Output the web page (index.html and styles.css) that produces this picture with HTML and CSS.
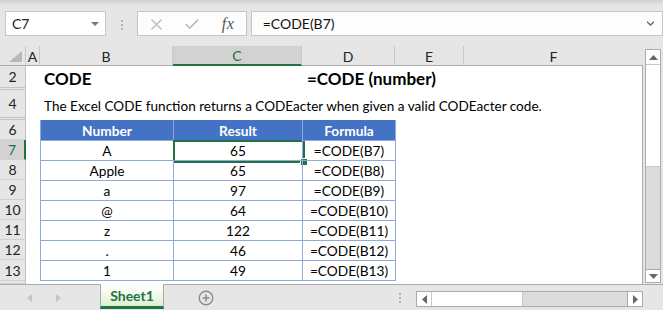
FILE: index.html
```html
<!DOCTYPE html>
<html>
<head>
<meta charset="utf-8">
<link rel="stylesheet" href="styles.css">
</head>
<body>
<div class="app">
  <div class="toolbar">
    <div class="namebox"><span>C7</span><svg width="8" height="4" viewBox="0 0 8 4"><polygon points="0,0 8,0 4,4" fill="#777"/></svg></div>
    <svg class="grip" width="2" height="10" viewBox="0 0 2 10"><rect x="0" y="0" width="2" height="2" fill="#b4b4b4"/><rect x="0" y="4" width="2" height="2" fill="#b4b4b4"/><rect x="0" y="8" width="2" height="2" fill="#b4b4b4"/></svg>
    <div class="fbtns">
      <svg class="ic-x" width="11" height="11" viewBox="0 0 11 11"><path d="M0.5 0.5 L10.5 10.5 M10.5 0.5 L0.5 10.5" stroke="#bcbcbc" stroke-width="1.4" fill="none"/></svg>
      <svg class="ic-ok" width="14" height="10" viewBox="0 0 14 10"><path d="M0.8 5 L4.8 9 L13.2 0.6" stroke="#bcbcbc" stroke-width="1.6" fill="none"/></svg>
      <span class="fx">fx</span>
    </div>
    <div class="finput"><span>=CODE(B7)</span><svg width="7" height="5" viewBox="0 0 7 5"><path d="M0 0 L3.5 3 L7 0 L7 1.8 L3.5 5 L0 1.8 Z" fill="#6a6a6a"/></svg></div>
  </div>

  <div class="main">
    <div class="sheet">
      <div class="row head">
        <div class="corner"><svg width="13" height="11" viewBox="0 0 13 11"><polygon points="13,0 13,11 0,11" fill="#b8b8b8"/></svg></div>
        <div class="ch">A</div>
        <div class="ch">B</div>
        <div class="ch sel">C</div>
        <div class="ch">D</div>
        <div class="ch">E</div>
        <div class="ch last">F</div>
      </div>
      <div class="row r2">
        <div class="rh dbl">2</div><div></div>
        <div class="title">CODE</div><div></div>
        <div class="title syn">=CODE (number)</div><div></div><div class="edge"></div>
      </div>
      <div class="row r4">
        <div class="rh dbl">4</div><div></div>
        <div class="desc">The Excel CODE function returns a CODEacter when given a valid CODEacter code.</div><div></div>
        <div></div><div></div><div class="edge"></div>
      </div>
      <div class="row r6">
        <div class="rh">6</div><div></div>
        <div class="th">Number</div><div class="th">Result</div><div class="th">Formula</div>
        <div class="tend"></div><div class="edge"></div>
      </div>
      <div class="row">
        <div class="rh rsel">7</div><div></div>
        <div class="td">A</div><div class="td cur">65<span class="selbox"></span><span class="handle"></span></div><div class="td">=CODE(B7)</div>
        <div class="tend"></div><div class="edge"></div>
      </div>
      <div class="row">
        <div class="rh">8</div><div></div>
        <div class="td">Apple</div><div class="td">65</div><div class="td">=CODE(B8)</div>
        <div class="tend"></div><div class="edge"></div>
      </div>
      <div class="row">
        <div class="rh">9</div><div></div>
        <div class="td">a</div><div class="td">97</div><div class="td">=CODE(B9)</div>
        <div class="tend"></div><div class="edge"></div>
      </div>
      <div class="row">
        <div class="rh">10</div><div></div>
        <div class="td">@</div><div class="td">64</div><div class="td">=CODE(B10)</div>
        <div class="tend"></div><div class="edge"></div>
      </div>
      <div class="row">
        <div class="rh">11</div><div></div>
        <div class="td">z</div><div class="td">122</div><div class="td">=CODE(B11)</div>
        <div class="tend"></div><div class="edge"></div>
      </div>
      <div class="row">
        <div class="rh">12</div><div></div>
        <div class="td">.</div><div class="td">46</div><div class="td">=CODE(B12)</div>
        <div class="tend"></div><div class="edge"></div>
      </div>
      <div class="row r13">
        <div class="rh">13</div><div></div>
        <div class="td">1</div><div class="td">49</div><div class="td">=CODE(B13)</div>
        <div class="tend"></div><div class="edge"></div>
      </div>
      <div class="row r14">
        <div class="rh"></div><div></div><div></div><div></div><div></div><div></div><div class="edge"></div>
      </div>
    </div>
    <div class="vscroll">
      <div class="vbox">
        <div class="vbtn up"><svg width="9" height="5" viewBox="0 0 9 5"><polygon points="0,5 9,5 4.5,0" fill="#666"/></svg></div>
        <div class="vthumb"></div>
        <div class="vtrack"></div>
        <div class="vbtn down"><svg width="9" height="5" viewBox="0 0 9 5"><polygon points="0,0 9,0 4.5,5" fill="#666"/></svg></div>
      </div>
    </div>
  </div>

  <div class="tabbar">
    <div class="nav">
      <svg width="5" height="8" viewBox="0 0 5 8"><polygon points="5,0 5,8 0,4" fill="#c4c4c4"/></svg>
      <svg width="5" height="8" viewBox="0 0 5 8"><polygon points="0,0 0,8 5,4" fill="#c4c4c4"/></svg>
    </div>
    <div class="tab">Sheet1</div>
    <svg class="plus" width="16" height="16" viewBox="0 0 16 16"><circle cx="8" cy="8" r="6.8" stroke="#8c8c8c" stroke-width="1.4" fill="none"/><path d="M8 4.5 V11.5 M4.5 8 H11.5" stroke="#8c8c8c" stroke-width="1.6"/></svg>
    <svg class="hgrip" width="2" height="10" viewBox="0 0 2 10"><rect x="0" y="0" width="2" height="2" fill="#b4b4b4"/><rect x="0" y="4" width="2" height="2" fill="#b4b4b4"/><rect x="0" y="8" width="2" height="2" fill="#b4b4b4"/></svg>
    <div class="hscroll">
      <div class="hbtn"><svg width="5" height="9" viewBox="0 0 5 9"><polygon points="5,0 5,9 0,4.5" fill="#666"/></svg></div>
      <div class="hthumb"></div>
      <div class="htrack"></div>
      <div class="hbtn"><svg width="5" height="9" viewBox="0 0 5 9"><polygon points="0,0 0,9 5,4.5" fill="#666"/></svg></div>
    </div>
  </div>
</div>
</body>
</html>
```

FILE: styles.css
```css
html, body {
  margin: 0;
  padding: 0;
}
body {
  width: 663px;
  height: 310px;
  overflow: hidden;
  background: #e6e6e6;
  font-family: Lato, "Open Sans", sans-serif;
  font-size: 13.7px;
  color: #000;
}
.app {
  display: flex;
  flex-direction: column;
  width: 663px;
  height: 310px;
}

/* toolbar */
.toolbar {
  height: 46px;
  box-sizing: border-box;
  padding: 11px 0 0 5px;
  display: flex;
  align-items: flex-start;
  background: linear-gradient(#d2d2d2 0px, #e6e6e6 6px);
}
.namebox {
  width: 101px;
  height: 25px;
  box-sizing: border-box;
  border: 1px solid #c6c6c6;
  background: #fff;
  display: flex;
  align-items: center;
  justify-content: space-between;
  padding: 0 6px 0 6px;
  color: #222;
  font-size: 14px;
}
.grip {
  margin: 9px 0 0 15px;
}
.fbtns {
  margin-left: 14px;
  width: 110px;
  height: 25px;
  box-sizing: border-box;
  border: 1px solid #c6c6c6;
  background: #fdfdfd;
  display: flex;
  align-items: center;
  padding-left: 13px;
}
.ic-x { margin-top: 1px; }
.ic-ok { margin-left: 23px; margin-top: 1px; }
.fx {
  margin-left: 23px;
  font-family: "Liberation Serif", serif;
  font-style: italic;
  font-size: 16px;
  color: #555;
  letter-spacing: 0.5px;
}
.finput {
  margin-left: 4px;
  width: 413px;
  height: 25px;
  box-sizing: border-box;
  border: 1px solid #c6c6c6;
  background: #fdfdfd;
  display: flex;
  align-items: center;
  justify-content: space-between;
  padding: 0 8px 0 11px;
  color: #111;
  font-size: 14px;
}

/* sheet */
.main {
  display: flex;
  height: 238px;
}
.sheet {
  width: 643px;
  background: #fff;
}
.row {
  display: grid;
  grid-template-columns: 26px 14px 133px 129px 93px 69px 179px;
  height: 20px;
}
.row > div {
  box-sizing: border-box;
  white-space: nowrap;
  display: flex;
  align-items: center;
  min-width: 0;
}
.row.head {
  background: #e6e6e6;
}
.corner {
  border-right: 1px solid #c8c8c8;
  border-bottom: 1px solid #ababab;
  align-items: flex-end !important;
  justify-content: flex-end;
  padding: 0 3px 3px 0;
}
.ch {
  justify-content: center;
  border-right: 1px solid #c8c8c8;
  border-bottom: 1px solid #ababab;
  color: #222;
  padding-top: 1px;
  font-size: 14px;
}
.ch.last { border-right: none; }
.ch.sel {
  background: #d2d2d2;
  color: #217346;
  border-bottom: 2px solid #217346;
}
.rh {
  background: #e6e6e6;
  border-right: 1px solid #c0c0c0;
  border-bottom: 1px solid #d0d0d0;
  justify-content: center;
  color: #222;
  font-size: 14px;
}
.rh.dbl { border-bottom: 3px double #c4c4c4; }
.rh.rsel {
  background: #d2d2d2;
  border-right: 2px solid #217346;
  color: #217346;
}
.edge { border-right: 1px solid #ababab; }

.r2 { height: 24px; }
.r4 { height: 30px; }
.title {
  font-weight: bold;
  font-size: 17px;
  padding-left: 4px;
  padding-top: 1px;
}
.title.syn { padding-left: 5px; }
.desc {
  padding-left: 4px;
  padding-top: 2px;
  font-size: 13.55px;
}
.th {
  background: #4472c4;
  color: #fff;
  font-weight: bold;
  justify-content: center;
  border-left: 1px solid #8eaadb;
}
.r6 .th:first-of-type { border-left-color: #4472c4; }
.td {
  justify-content: center;
  border-left: 1px solid #8eaadb;
  border-top: 1px solid #8eaadb;
  position: relative;
}
.tend { border-left: 1px solid #8eaadb; }
.r13 { height: 21px; }
.r13 .td { border-bottom: 1px solid #8eaadb; }
.r14 { height: 3px; }

.selbox {
  position: absolute;
  left: -1px;
  top: -1px;
  width: 132px;
  height: 23px;
  box-sizing: border-box;
  border: 2px solid #217346;
}
.handle {
  position: absolute;
  left: 127px;
  top: 18px;
  width: 6px;
  height: 6px;
  background: #217346;
  border: 1px solid #fff;
  box-sizing: content-box;
  margin: -1px 0 0 -1px;
}

/* vertical scrollbar */
.vscroll {
  width: 20px;
  box-sizing: border-box;
  padding: 3px 2px 1px 2px;
}
.vbox {
  height: 100%;
  display: flex;
  flex-direction: column;
  border: 1px solid #ababab;
  box-sizing: border-box;
  background: #dcdcdc;
}
.vbtn {
  height: 14px;
  background: #fff;
  display: flex;
  align-items: center;
  justify-content: center;
}
.vbtn.up { border-bottom: 1px solid #c8c8c8; }
.vbtn.down { border-top: 1px solid #ababab; height: 12px; }
.vthumb {
  height: 101px;
  background: #fff;
  border-bottom: 1px solid #c8c8c8;
}
.vtrack { flex: 1; }

/* tab bar */
.tabbar {
  height: 26px;
  box-sizing: border-box;
  border-top: 1px solid #ababab;
  display: flex;
  align-items: flex-start;
}
.nav {
  width: 100px;
  display: flex;
  gap: 24px;
  padding: 9px 0 0 27px;
  box-sizing: border-box;
}
.tab {
  width: 64px;
  height: 25px;
  margin-top: -1px;
  box-sizing: border-box;
  border-left: 1px solid #ababab;
  border-right: 1px solid #ababab;
  border-bottom: 3px solid #217346;
  background: linear-gradient(#ffffff 0%, #f4faef 40%, #dcefcf 100%);
  color: #217346;
  font-weight: bold;
  font-size: 14px;
  display: flex;
  align-items: center;
  justify-content: center;
  padding-top: 1px;
}
.plus {
  margin: 5px 0 0 34px;
}
.hgrip {
  margin: 8px 0 0 185px;
}
.hscroll {
  margin: 6px 0 0 15px;
  width: 227px;
  height: 16px;
  box-sizing: border-box;
  border: 1px solid #ababab;
  display: flex;
  background: #dcdcdc;
}
.hbtn {
  width: 14px;
  background: #fff;
  display: flex;
  align-items: center;
  justify-content: center;
}
.hbtn:first-child { border-right: 1px solid #c8c8c8; }
.hbtn:last-child { border-left: 1px solid #ababab; }
.hthumb {
  width: 90px;
  background: #fff;
  border-right: 1px solid #c8c8c8;
}
.htrack { flex: 1; }
```
